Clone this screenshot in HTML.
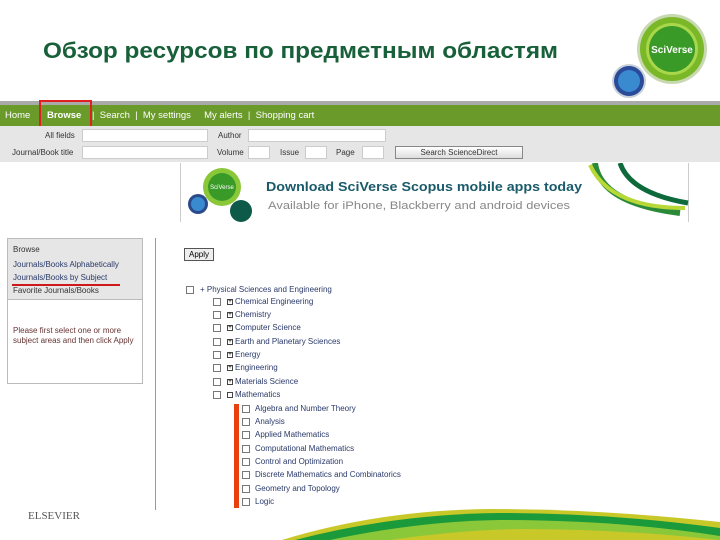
<!DOCTYPE html>
<html><head><meta charset="utf-8"><style>
*{margin:0;padding:0;box-sizing:border-box}
body{width:720px;height:540px;position:relative;overflow:hidden;background:#fff;font-family:"Liberation Sans",Arial,sans-serif}
.a{position:absolute}
.nav{font-size:9.5px;color:#fff;white-space:nowrap}
.lbl{font-size:8px;color:#333;white-space:nowrap}
.inp{background:#fff;border:1px solid #ccc}
.t{font-size:8px;color:#2a3a6a;white-space:nowrap}
.cb{width:8px;height:8px;border:1px solid #777;background:#fff}
.pl{width:6px;height:6px;border:1px solid #444;font-size:6px;line-height:4px;text-align:center;color:#000}
</style></head><body>
<svg class="a" style="left:0;top:0" width="720" height="100">
<text x="43" y="58" font-family="Liberation Sans, DejaVu Sans, sans-serif" font-weight="bold" font-size="22" fill="#17603a" textLength="515" lengthAdjust="spacingAndGlyphs">Обзор ресурсов по предметным областям</text>
<circle cx="672" cy="49" r="35" fill="#c8d8b0"/>
<circle cx="672" cy="49" r="32" fill="#7ab828"/>
<circle cx="672" cy="49" r="26" fill="#a8d84a"/>
<circle cx="672" cy="49" r="23" fill="#3a9a28"/>
<text x="672" y="53" text-anchor="middle" font-size="10" font-weight="bold" fill="#fff" font-family="Liberation Sans, sans-serif">SciVerse</text>
<circle cx="629" cy="81" r="17" fill="#c8d0d8"/>
<circle cx="629" cy="81" r="15" fill="#2a4a9a"/>
<circle cx="629" cy="81" r="11" fill="#3a8ad0"/>
</svg>
<div class="a" style="left:0;top:101px;width:720px;height:4px;background:#aaa"></div>
<div class="a" style="left:0;top:105px;width:720px;height:21px;background:#6a9a2a"></div>
<div class="a nav" style="left:5px;top:110px">Home</div>
<div class="a nav" style="left:47px;top:110px;font-weight:bold">Browse</div>
<div class="a nav" style="left:92px;top:110px">|&nbsp; Search &nbsp;|&nbsp; My settings &nbsp;&nbsp;&nbsp; My alerts &nbsp;|&nbsp; Shopping cart</div>
<div class="a" style="left:39px;top:100px;width:53px;height:28px;border:2px solid #e02020"></div>
<div class="a" style="left:0;top:126px;width:720px;height:36px;background:#e6e6e6"></div>
<div class="a lbl" style="left:45px;top:131px">All fields</div>
<div class="a inp" style="left:82px;top:129px;width:126px;height:13px"></div>
<div class="a lbl" style="left:218px;top:131px">Author</div>
<div class="a inp" style="left:248px;top:129px;width:138px;height:13px"></div>
<div class="a lbl" style="left:12px;top:148px">Journal/Book title</div>
<div class="a inp" style="left:82px;top:146px;width:126px;height:13px"></div>
<div class="a lbl" style="left:217px;top:148px">Volume</div>
<div class="a inp" style="left:248px;top:146px;width:22px;height:13px"></div>
<div class="a lbl" style="left:280px;top:148px">Issue</div>
<div class="a inp" style="left:305px;top:146px;width:22px;height:13px"></div>
<div class="a lbl" style="left:336px;top:148px">Page</div>
<div class="a inp" style="left:362px;top:146px;width:22px;height:13px"></div>
<div class="a lbl" style="left:395px;top:146px;width:128px;height:13px;border:1px solid #888;background:linear-gradient(#fff,#ddd);text-align:center;line-height:11px">Search ScienceDirect</div>
<div class="a" style="left:180px;top:163px;width:1px;height:59px;background:#ccc"></div>
<div class="a" style="left:688px;top:163px;width:1px;height:59px;background:#ccc"></div>
<svg class="a" style="left:180px;top:163px" width="510" height="60">
<circle cx="42" cy="24" r="19" fill="#8ac83a"/><circle cx="42" cy="24" r="14" fill="#3a9a28"/>
<text x="42" y="26" text-anchor="middle" font-size="6" fill="#fff" font-family="Liberation Sans">SciVerse</text>
<circle cx="18" cy="41" r="10" fill="#2a4a8a"/><circle cx="18" cy="41" r="7" fill="#3a8ad0"/>
<circle cx="61" cy="48" r="11" fill="#0e5a48"/>
<text x="86" y="28" font-size="13" font-weight="bold" fill="#1a5a6a" font-family="Liberation Sans" textLength="316" lengthAdjust="spacingAndGlyphs">Download SciVerse Scopus mobile apps today</text>
<text x="88" y="46" font-size="11" fill="#888" font-family="Liberation Sans" textLength="302" lengthAdjust="spacingAndGlyphs">Available for iPhone, Blackberry and android devices</text>
<path d="M415 0 Q420 40 500 50" stroke="#2a8a3a" stroke-width="6" fill="none"/>
<path d="M410 2 Q430 45 505 45" stroke="#b8d838" stroke-width="4" fill="none"/>
<path d="M440 0 Q450 30 508 40" stroke="#0e6a3a" stroke-width="5" fill="none"/>
</svg>
<div class="a" style="left:7px;top:238px;width:136px;height:146px;border:1px solid #bbb;background:#fff"></div>
<div class="a" style="left:8px;top:239px;width:134px;height:61px;background:#e6e6e6;border-bottom:1px solid #bbb"></div>
<div class="a t" style="left:13px;top:245px;color:#333">Browse</div>
<div class="a t" style="left:13px;top:260px">Journals/Books Alphabetically</div>
<div class="a t" style="left:13px;top:273px">Journals/Books by Subject</div>
<div class="a t" style="left:13px;top:286px;color:#333">Favorite Journals/Books</div>
<div class="a" style="left:12px;top:284px;width:108px;height:2px;background:#d01818"></div>
<div class="a t" style="left:13px;top:326px;color:#633;line-height:10px;white-space:normal;width:125px">Please first select one or more subject areas and then click Apply</div>
<div class="a" style="left:155px;top:238px;width:1px;height:272px;background:#999"></div>
<div class="a" style="left:28px;top:510px;font-family:'Liberation Serif',serif;font-size:11px;color:#555">ELSEVIER</div>
<div class="a lbl" style="left:184px;top:248px;width:30px;height:13px;border:1px solid #555;background:#eee;text-align:center;line-height:11px;color:#000">Apply</div>
<div class="a cb" style="left:186px;top:286px"></div>
<div class="a t" style="left:200px;top:285px">+ Physical Sciences and Engineering</div>
<div class="a" style="left:213px;top:296px">
<div class="a cb" style="left:0;top:2px"></div><div class="a pl" style="left:14px;top:3px">+</div><div class="a t" style="left:22px;top:1px">Chemical Engineering</div>
<div class="a cb" style="left:0;top:15px"></div><div class="a pl" style="left:14px;top:16px">+</div><div class="a t" style="left:22px;top:14px">Chemistry</div>
<div class="a cb" style="left:0;top:28px"></div><div class="a pl" style="left:14px;top:29px">+</div><div class="a t" style="left:22px;top:27px">Computer Science</div>
<div class="a cb" style="left:0;top:42px"></div><div class="a pl" style="left:14px;top:43px">+</div><div class="a t" style="left:22px;top:41px">Earth and Planetary Sciences</div>
<div class="a cb" style="left:0;top:55px"></div><div class="a pl" style="left:14px;top:56px">+</div><div class="a t" style="left:22px;top:54px">Energy</div>
<div class="a cb" style="left:0;top:68px"></div><div class="a pl" style="left:14px;top:69px">+</div><div class="a t" style="left:22px;top:67px">Engineering</div>
<div class="a cb" style="left:0;top:82px"></div><div class="a pl" style="left:14px;top:83px">+</div><div class="a t" style="left:22px;top:81px">Materials Science</div>
<div class="a cb" style="left:0;top:95px"></div><div class="a pl" style="left:14px;top:96px"></div><div class="a t" style="left:22px;top:94px">Mathematics</div>
</div>
<div class="a" style="left:234px;top:404px;width:5px;height:104px;background:#e84010"></div>
<div class="a" style="left:242px;top:403px">
<div class="a cb" style="top:2px"></div><div class="a t" style="left:13px;top:1px">Algebra and Number Theory</div>
<div class="a cb" style="top:15px"></div><div class="a t" style="left:13px;top:14px">Analysis</div>
<div class="a cb" style="top:28px"></div><div class="a t" style="left:13px;top:27px">Applied Mathematics</div>
<div class="a cb" style="top:42px"></div><div class="a t" style="left:13px;top:41px">Computational Mathematics</div>
<div class="a cb" style="top:55px"></div><div class="a t" style="left:13px;top:54px">Control and Optimization</div>
<div class="a cb" style="top:68px"></div><div class="a t" style="left:13px;top:67px">Discrete Mathematics and Combinatorics</div>
<div class="a cb" style="top:82px"></div><div class="a t" style="left:13px;top:81px">Geometry and Topology</div>
<div class="a cb" style="top:95px"></div><div class="a t" style="left:13px;top:94px">Logic</div>
</div>
<svg class="a" style="left:0;top:500px" width="720" height="40">
<path d="M282 40 Q380 10 490 9 Q600 9 720 22 L720 40 Z" fill="#c8c828"/>
<path d="M295 40 Q395 14 500 13 Q610 13 720 28 L720 40 Z" fill="#1a9a3a"/>
<path d="M330 40 Q420 21 500 20 Q620 20 720 36 L720 40 Z" fill="#8ac83a"/>
<path d="M390 40 Q460 30 520 29 Q620 29 720 40 Z" fill="#c8c828"/>
</svg>
</body></html>
